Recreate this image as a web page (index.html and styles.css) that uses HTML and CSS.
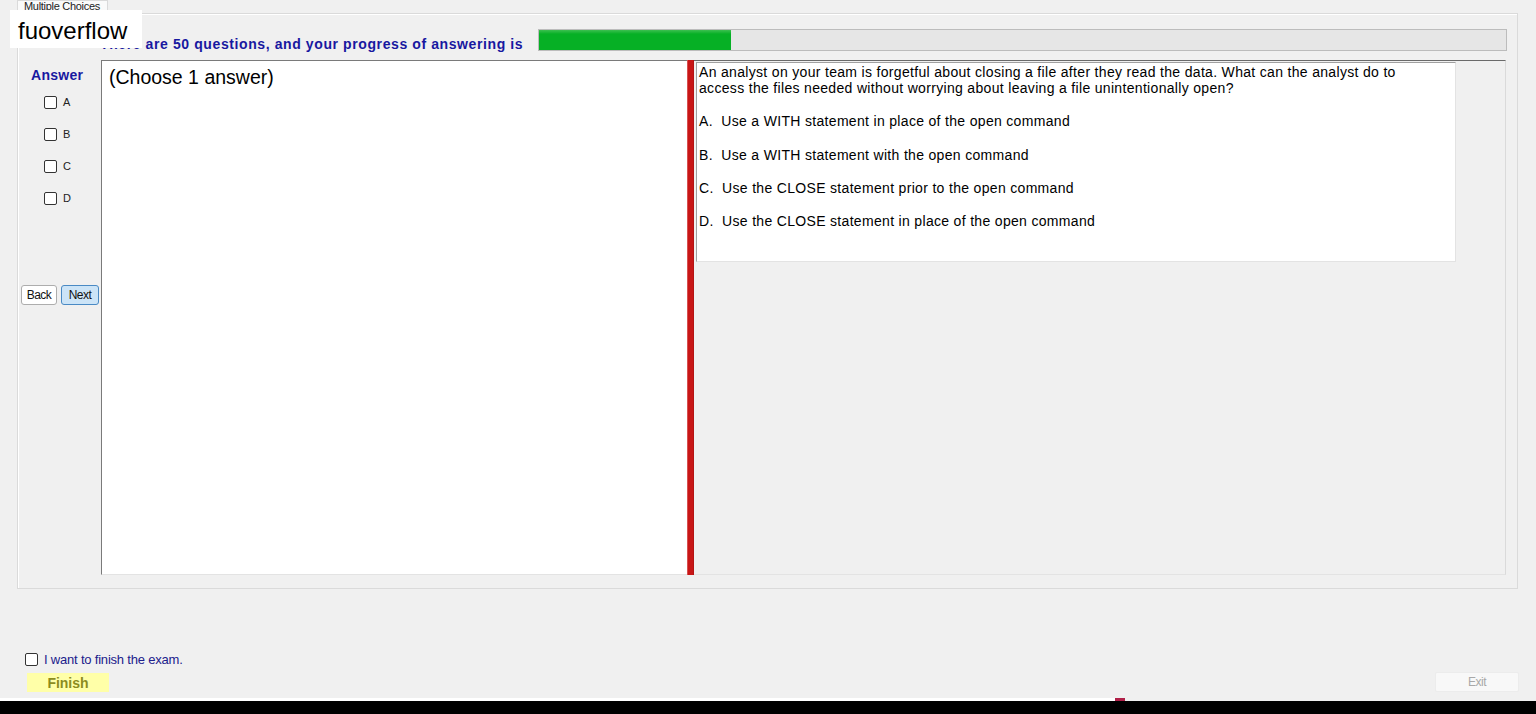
FILE: index.html
```html
<!DOCTYPE html>
<html lang="en">
<head>
    <meta charset="UTF-8">
    <meta name="viewport" content="width=device-width, initial-scale=1.0">
    <title>Multiple Choices - Exam</title>
    <link rel="stylesheet" href="styles.css">
</head>
<body>
    <div class="exam-window">
        <div class="watermark">fuoverflow</div>

        <div class="tabs">
            <span class="tab">Multiple Choices</span>
        </div>

        <div class="tab-page">
            <div class="header">
                <div class="title">There are 50 questions, and your progress of answering is</div>
                <div class="progress"><div class="progress-fill" style="width: 19.9%"></div></div>
            </div>

            <div class="content">
                <div class="sidebar">
                    <div class="answer-label">Answer</div>
                    <label class="option"><input type="checkbox"> A</label>
                    <label class="option"><input type="checkbox"> B</label>
                    <label class="option"><input type="checkbox"> C</label>
                    <label class="option"><input type="checkbox"> D</label>
                    <div class="nav-buttons">
                        <button class="btn">Back</button>
                        <button class="btn btn-active">Next</button>
                    </div>
                </div>

                <div class="split">
                    <div class="pane-left">(Choose 1 answer)</div>
                    <div class="splitter"></div>
                    <div class="pane-right">
                        <div class="question">
                            <p class="question-text">An analyst on your team is forgetful about closing a file after they read the data. What can the analyst do to<br>access the files needed without worrying about leaving a file unintentionally open?</p>
                            <p class="choice">A.  Use a WITH statement in place of the open command</p>
                            <p class="choice">B.  Use a WITH statement with the open command</p>
                            <p class="choice">C.  Use the CLOSE statement prior to the open command</p>
                            <p class="choice">D.  Use the CLOSE statement in place of the open command</p>
                        </div>
                    </div>
                </div>
            </div>
        </div>

        <div class="footer">
            <div class="finish-box">
                <label class="finish-check"><input type="checkbox"> I want to finish the exam.</label>
                <button class="btn-finish">Finish</button>
            </div>
            <button class="btn-exit">Exit</button>
        </div>

        <div class="taskbar-edge"></div>
        <div class="taskbar"></div>
    </div>
</body>
</html>
```

FILE: styles.css
```css
:root {
    --fundo: #f0f0f0;
    --azul: #1818a0;
    --borda: #dadada;
    --borda-escura: #7a7a7a;
    --branco: #ffffff;
}

* {
    box-sizing: border-box;
}

body {
    margin: 0;
    background-color: var(--fundo);
    font-family: 'Liberation Sans', Arial, sans-serif;
    color: #000;
}

.exam-window {
    position: relative;
    height: 714px;
    display: flex;
    flex-direction: column;
    overflow: hidden;
}

.watermark {
    position: absolute;
    top: 10px;
    left: 10px;
    height: 38px;
    padding: 0 15px 0 8px;
    background-color: var(--branco);
    font-size: 24px;
    line-height: 42px;
    z-index: 2;
}

.tabs {
    height: 13px;
    padding-left: 17px;
    display: flex;
}

.tab {
    width: 91px;
    height: 13px;
    border: 1px solid var(--borda);
    border-bottom: none;
    background-color: #fafafa;
    font-size: 11px;
    line-height: 10px;
    letter-spacing: -0.3px;
    color: #222;
    padding-left: 6px;
    overflow: hidden;
}

.tab-page {
    height: 576px;
    margin: 0 18px 0 17px;
    border: 1px solid var(--borda);
    box-shadow: inset 1px 1px 0 var(--branco);
    display: flex;
    flex-direction: column;
}

.header {
    height: 46px;
    display: flex;
    align-items: flex-start;
}

.title {
    width: 520px;
    padding-left: 82px;
    margin-top: 22px;
    font-size: 14px;
    line-height: 16px;
    font-weight: bold;
    letter-spacing: 0.6px;
    color: var(--azul);
    white-space: nowrap;
}

.progress {
    flex: 1;
    height: 22px;
    margin: 15px 10px 0 0;
    border: 1px solid #bcbcbc;
    background-color: #e6e6e6;
}

.progress-fill {
    height: 100%;
    background: linear-gradient(to bottom, #3cc050 0, #06b025 4px, #06b025 100%);
}

.content {
    display: flex;
    height: 515px;
}

.sidebar {
    width: 83px;
    display: flex;
    flex-direction: column;
}

.answer-label {
    margin: 7px 0 0 13px;
    font-size: 14px;
    line-height: 16px;
    font-weight: bold;
    letter-spacing: 0.3px;
    color: var(--azul);
}

.option {
    display: flex;
    align-items: center;
    gap: 6px;
    height: 14px;
    margin: 18px 0 0 26px;
    font-size: 11px;
    color: #222;
}

.option:first-of-type {
    margin-top: 12px;
}

input[type="checkbox"] {
    appearance: none;
    width: 13px;
    height: 13px;
    margin: 0;
    border: 1px solid #333;
    border-radius: 2px;
    background-color: var(--branco);
}

.nav-buttons {
    display: flex;
    gap: 4px;
    margin: 80px 0 0 3px;
}

.btn {
    width: 36px;
    height: 20px;
    padding: 0;
    border: 1px solid #adadad;
    border-radius: 3px;
    background-color: var(--branco);
    font-family: inherit;
    font-size: 12px;
    letter-spacing: -0.5px;
    color: #111;
}

.btn-active {
    width: 38px;
    background-color: #cce4f7;
    border-color: #4a8ac4;
}

.split {
    width: 1405px;
    display: flex;
}

.pane-left {
    width: 586px;
    background-color: var(--branco);
    border-top: 1px solid var(--borda-escura);
    border-left: 1px solid var(--borda-escura);
    border-bottom: 1px solid #e3e3e3;
    padding: 5px 0 0 7px;
    font-size: 19.5px;
    line-height: 22px;
}

.splitter {
    width: 7px;
    background: linear-gradient(to right, #e88a8a 0, #c81616 1px, #c81616 6px, #a01010 7px);
}

.pane-right {
    flex: 1;
    border-top: 1px solid #6a6a6a;
    border-right: 1px solid var(--borda);
    border-bottom: 1px solid #e3e3e3;
    padding: 1px 0 0 2px;
}

.question {
    width: 760px;
    height: 200px;
    background-color: var(--branco);
    border: 1px solid #e3e3e3;
    border-top-color: #a0a0a0;
    border-left-color: #a0a0a0;
    padding: 1px 0 0 2px;
    font-size: 14px;
    line-height: 16px;
    letter-spacing: 0.32px;
}

.question p {
    margin: 0;
}

.question .choice {
    margin-top: 17.33px;
    white-space: pre;
}

.footer {
    display: flex;
    justify-content: space-between;
    align-items: flex-end;
    padding: 63px 17px 0 25px;
}

.finish-box {
    display: flex;
    flex-direction: column;
}

.finish-check {
    display: flex;
    align-items: center;
    gap: 6px;
    height: 14px;
    font-size: 13px;
    letter-spacing: -0.2px;
    color: #20208c;
}

.btn-finish {
    width: 82px;
    height: 19px;
    margin: 7px 0 0 2px;
    padding: 0;
    border: none;
    background-color: #ffffa8;
    font-family: inherit;
    font-size: 14px;
    font-weight: bold;
    color: #8c8c1e;
}

.btn-exit {
    width: 84px;
    height: 20px;
    padding: 0;
    border: 1px solid #ececec;
    border-radius: 2px;
    background-color: #f8f8f8;
    font-family: inherit;
    font-size: 12px;
    letter-spacing: -0.5px;
    color: #a8a8a8;
}

.taskbar-edge {
    height: 3px;
    margin-top: 6px;
    background: linear-gradient(to right, #ffffff 0, #ffffff 1115px, #b02048 1115px, #b02048 1125px, transparent 1125px);
}

.taskbar {
    height: 13px;
    background-color: #000;
}
```
